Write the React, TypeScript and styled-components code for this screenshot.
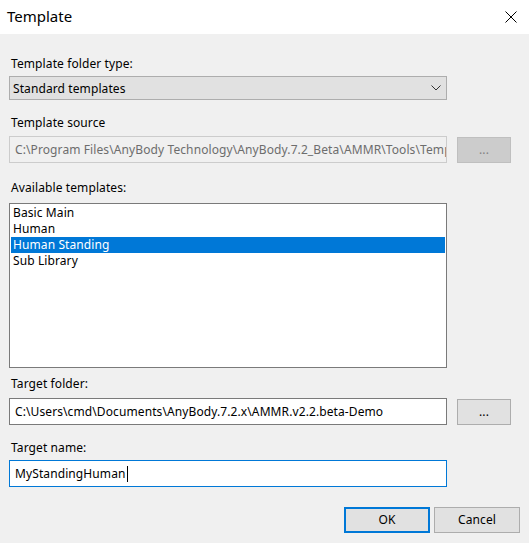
import React from "react";
import styled, { createGlobalStyle } from "styled-components";

const Global = createGlobalStyle`
  html, body { margin: 0; padding: 0; background: #f0f0f0; }
  body { font-family: "Noto Sans", "Open Sans", Arial, sans-serif; font-size: 12px; letter-spacing: 0.1px; color: #000; }
  * { box-sizing: border-box; }
`;

const Window = styled.div`
  width: 529px;
  height: 543px;
  display: flex;
  flex-direction: column;
  background: #f0f0f0;
  overflow: hidden;
`;

const TitleBar = styled.div`
  height: 34px;
  flex: none;
  background: #fff;
  display: flex;
  align-items: center;
  justify-content: space-between;
  padding: 0 12px 0 7px;
`;

const Title = styled.div`
  font-size: 15px;
  line-height: 20px;
  letter-spacing: 0;
  color: #000;
  margin-top: -2px;
`;

const Close = styled.div`
  width: 12px;
  height: 12px;
  display: flex;
`;

const Body = styled.div`
  display: flex;
  flex-direction: column;
  padding: 0 18px 0 9px;
`;

const Field = styled.div<{ $top: number; $gap: number }>`
  display: flex;
  flex-direction: column;
  margin-top: ${(p) => p.$top}px;
  gap: ${(p) => p.$gap}px;
`;

const Label = styled.div`
  line-height: 16px;
  height: 16px;
  padding-left: 2px;
`;

const Combo = styled.div`
  width: 438px;
  height: 24px;
  background: #e1e1e1;
  border: 1px solid #adadad;
  display: flex;
  align-items: center;
  justify-content: space-between;
  padding: 0 5px 0 3px;
`;

const Row = styled.div`
  display: flex;
  align-items: center;
  gap: 10px;
`;

const TextBox = styled.div<{ $disabled?: boolean; $focused?: boolean }>`
  width: 438px;
  height: 27px;
  flex: none;
  background: ${(p) => (p.$disabled ? "#f0f0f0" : "#fff")};
  border: 1px solid ${(p) => (p.$disabled ? "#cccccc" : p.$focused ? "#0078d7" : "#7a7a7a")};
  color: ${(p) => (p.$disabled ? "#6d6d6d" : "#000")};
  padding: 0 4px 0 5px;
  display: flex;
  align-items: center;
  white-space: nowrap;
  overflow: hidden;
`;

const Caret = styled.span`
  display: inline-block;
  width: 1px;
  height: 16px;
  background: #000;
  margin-left: 1px;
`;

const Button = styled.div<{ $disabled?: boolean; $default?: boolean; $w: number }>`
  width: ${(p) => p.$w}px;
  height: 26px;
  flex: none;
  background: ${(p) => (p.$disabled ? "#cccccc" : "#e1e1e1")};
  border: ${(p) => (p.$default ? "2px solid #0078d7" : p.$disabled ? "1px solid #bfbfbf" : "1px solid #adadad")};
  color: ${(p) => (p.$disabled ? "#838383" : "#000")};
  display: flex;
  align-items: center;
  justify-content: center;
  line-height: 16px;
`;

const List = styled.div`
  width: 438px;
  height: 165px;
  background: #fff;
  border: 1px solid #7a7a7a;
  padding: 1px;
  display: flex;
  flex-direction: column;
`;

const Item = styled.div<{ $selected?: boolean }>`
  height: 16px;
  line-height: 16px;
  padding-left: 2px;
  background: ${(p) => (p.$selected ? "#0078d7" : "transparent")};
  color: ${(p) => (p.$selected ? "#fff" : "#000")};
`;

const Footer = styled.div`
  display: flex;
  justify-content: flex-end;
  gap: 4px;
  margin-top: 20px;
  margin-right: -9px;
`;

const items = ["Basic Main", "Human", "Human Standing", "Sub Library"];

export default function App() {
  return (
    <Window>
      <Global />
      <TitleBar>
        <Title>Template</Title>
        <Close>
          <svg width="12" height="12" viewBox="0 0 12 12">
            <path d="M0.5 0.5 L11.5 11.5 M11.5 0.5 L0.5 11.5" stroke="#000" strokeWidth="1" />
          </svg>
        </Close>
      </TitleBar>
      <Body>
        <Field $top={22} $gap={4}>
          <Label>Template folder type:</Label>
          <Combo>
            <span>Standard templates</span>
            <svg width="10" height="6" viewBox="0 0 10 6">
              <path d="M0.5 0.5 L5 5 L9.5 0.5" stroke="#333" strokeWidth="1" fill="none" />
            </svg>
          </Combo>
        </Field>
        <Field $top={15} $gap={5}>
          <Label>Template source</Label>
          <Row>
            <TextBox $disabled>C:\Program Files\AnyBody Technology\AnyBody.7.2_Beta\AMMR\Tools\Templates</TextBox>
            <Button $disabled $w={54}>...</Button>
          </Row>
        </Field>
        <Field $top={17} $gap={7}>
          <Label>Available templates:</Label>
          <List>
            {items.map((it) => (
              <Item key={it} $selected={it === "Human Standing"}>
                {it}
              </Item>
            ))}
          </List>
        </Field>
        <Field $top={8} $gap={6}>
          <Label>Target folder:</Label>
          <Row>
            <TextBox>C:\Users\cmd\Documents\AnyBody.7.2.x\AMMR.v2.2.beta-Demo</TextBox>
            <Button $w={54}>...</Button>
          </Row>
        </Field>
        <Field $top={15} $gap={4}>
          <Label>Target name:</Label>
          <TextBox $focused>
            MyStandingHuman
            <Caret />
          </TextBox>
        </Field>
        <Footer>
          <Button $default $w={86}>OK</Button>
          <Button $w={86}>Cancel</Button>
        </Footer>
      </Body>
    </Window>
  );
}
